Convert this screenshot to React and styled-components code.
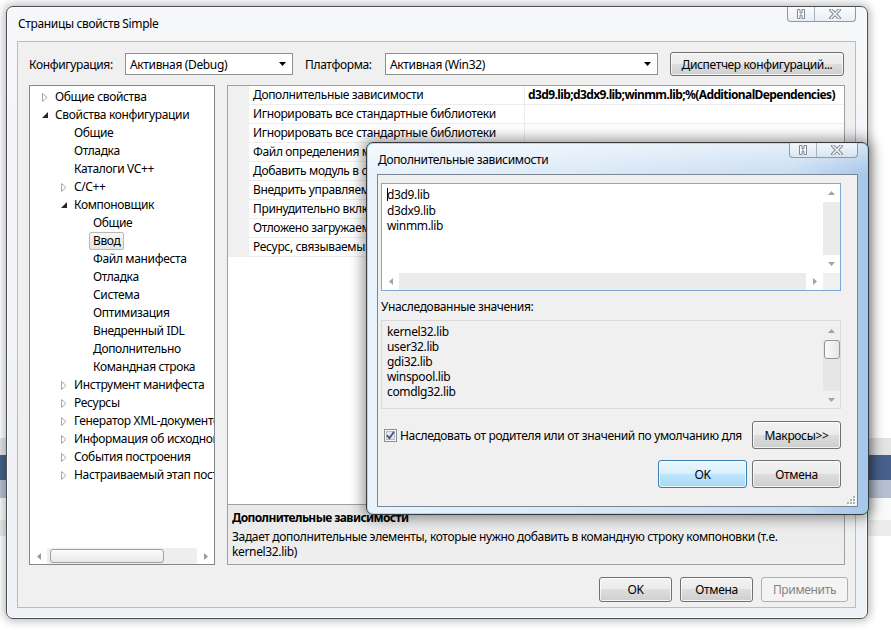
import React from "react";
import styled, { createGlobalStyle } from "styled-components";

const GlobalStyle = createGlobalStyle`
  html, body { margin: 0; padding: 0; }
  body {
    width: 891px; height: 630px; overflow: hidden;
    font-family: "Noto Sans", "Segoe UI", sans-serif;
    font-size: 12px; color: #000;
    letter-spacing: -0.35px;
    background: linear-gradient(180deg, #fff 0, #fff 438px, #e4e4e4 438px, #e4e4e4 455px,
      #46618b 455px, #46618b 480px, #b5c1d2 480px, #b5c1d2 498px, #fafafa 498px,
      #fafafa 520px, #ececec 520px, #ececec 536px, #fff 536px);
  }
  #root { width: 891px; height: 630px; }
`;

const Desktop = styled.div`
  position: relative;
  width: 891px;
  height: 630px;
`;

/* ---------- window chrome ---------- */
const MainWindow = styled.div`
  position: absolute;
  left: 6px; top: 6px;
  width: 862px; height: 613px;
  box-sizing: border-box;
  border: 1px solid #4b4f55;
  border-radius: 7px;
  background: linear-gradient(180deg, #f6f7f9 0, #edf0f4 100%);
  box-shadow: 0 0 9px 2px rgba(0, 0, 0, 0.28), inset 0 0 0 1px rgba(255,255,255,.8);
  display: flex;
  flex-direction: column;
`;

const TitleBar = styled.div`
  height: ${p => p.$h}px;
  flex: none;
  display: flex;
  align-items: flex-start;
  padding-left: 11px;
`;

const TitleText = styled.div`
  padding-top: ${p => p.$top}px;
  line-height: 16px;
  white-space: nowrap;
`;

const CaptionGroup = styled.div`
  margin-left: auto;
  margin-right: ${p => p.$right}px;
  display: flex;
  height: 15px;
  box-sizing: border-box;
  border: 1px solid #8d99a8;
  border-top: none;
  border-radius: 0 0 4px 4px;
  background: linear-gradient(180deg, rgba(255,255,255,.6), rgba(225,232,240,.6));
  overflow: hidden;
`;

const CaptionBtn = styled.div`
  width: ${p => p.$w}px;
  display: flex;
  align-items: center;
  justify-content: center;
  & + & { border-left: 1px solid #a9b3bf; }
`;

const HelpGlyph = () => (
  <svg width="8" height="10" viewBox="0 0 8 10">
    <path d="M0.5 0.5h2.5v3.5h2v-3.5h2.5v9h-2.5v-3.5h-2v3.5h-2.5z" fill="#fff" stroke="#7d8895" strokeWidth="1" />
  </svg>
);

const CloseGlyph = () => (
  <svg width="12" height="10" viewBox="0 0 12 10">
    <path d="M2 1L10 9M10 1L2 9" stroke="#7d8895" strokeWidth="3.4" strokeLinecap="square" />
    <path d="M2 1L10 9M10 1L2 9" stroke="#fff" strokeWidth="1.4" strokeLinecap="square" />
  </svg>
);

const Captions = ({ right }) => (
  <CaptionGroup $right={right}>
    <CaptionBtn $w={26}><HelpGlyph /></CaptionBtn>
    <CaptionBtn $w={40}><CloseGlyph /></CaptionBtn>
  </CaptionGroup>
);

const Client = styled.div`
  flex: 1;
  margin: 0 11px 10px 10px;
  border: 1px solid #b7bdc5;
  background: #f0f0f0;
  padding: 10px 10px 5px 11px;
  display: flex;
  flex-direction: column;
  min-height: 0;
`;

/* ---------- controls ---------- */
const ConfigRow = styled.div`
  display: flex;
  align-items: center;
  height: 24px;
  flex: none;
`;

const FieldLabel = styled.div`
  width: ${p => p.$w}px;
  white-space: nowrap;
`;

const Combo = styled.div`
  box-sizing: border-box;
  width: ${p => p.$w}px;
  margin-right: ${p => p.$mr || 0}px;
  height: 22px;
  border: 1px solid #8e8f8f;
  background: #fff;
  display: flex;
  align-items: center;
  padding: 0 6px 0 4px;
  white-space: nowrap;
`;

const ComboText = styled.span`
  flex: 1;
`;

const DownTri = () => (
  <svg width="7" height="4" viewBox="0 0 7 4"><polygon points="0,0 7,0 3.5,4" fill="#000" /></svg>
);

const Button = styled.button`
  box-sizing: border-box;
  width: ${p => p.$w}px;
  height: ${p => p.$h || 24}px;
  margin-left: ${p => (p.$push ? "auto" : "0")};
  padding: 0;
  font: inherit;
  letter-spacing: inherit;
  color: ${p => (p.disabled ? "#838383" : "#000")};
  border: 1px solid ${p => (p.$default ? "#3c7fb1" : p.disabled ? "#adb2b5" : "#707070")};
  border-radius: 3px;
  background: ${p =>
    p.$default
      ? "linear-gradient(180deg, #eaf6fd 0%, #d9f0fc 50%, #bee6fd 50%, #a7d9f5 100%)"
      : p.disabled
      ? "#f4f4f4"
      : "linear-gradient(180deg, #f2f2f2 0%, #ebebeb 50%, #dddddd 50%, #cfcfcf 100%)"};
  box-shadow: inset 0 0 0 1px ${p => (p.disabled ? "transparent" : "rgba(255,255,255,.75)")};
  flex: none;
`;

/* ---------- panels ---------- */
const Panels = styled.div`
  flex: 1;
  margin-top: 9px;
  display: flex;
  gap: 12px;
  min-height: 0;
`;

const TreePanel = styled.div`
  width: 186px;
  box-sizing: border-box;
  border: 1px solid #828790;
  background: #fff;
  display: flex;
  flex-direction: column;
`;

const TreeBody = styled.div`
  flex: 1;
  overflow: hidden;
  padding-top: 2px;
`;

const TreeRow = styled.div`
  height: 18px;
  display: flex;
  align-items: center;
  padding-left: ${p => 12 + p.$level * 19}px;
  white-space: nowrap;
`;

const ExpSlot = styled.span`
  width: 13px;
  flex: none;
  display: flex;
  align-items: center;
`;

const TreeLabel = styled.span`
  line-height: 16px;
  ${p =>
    p.$sel &&
    `
    margin-left: -4px;
    padding: 0 3px;
    border: 1px solid #b8b8b8;
    border-radius: 2px;
    background: linear-gradient(180deg, #f8f8f8, #e5e5e5);
  `}
`;

const Collapsed = () => (
  <svg width="6" height="9" viewBox="0 0 6 9"><polygon points="0.5,0.5 5,4.5 0.5,8.5" fill="#fff" stroke="#a6a6a6" /></svg>
);
const Expanded = () => (
  <svg width="6" height="6" viewBox="0 0 6 6"><polygon points="6,0 6,6 0,6" fill="#262626" /></svg>
);

const Tri = ({ dir, color = "#a3a3a3" }) => {
  const v = dir === "up" || dir === "down";
  const w = v ? 7 : 4;
  const h = v ? 4 : 7;
  const pts = { up: "0,4 3.5,0 7,4", down: "0,0 7,0 3.5,4", left: "4,0 4,7 0,3.5", right: "0,0 0,7 4,3.5" }[dir];
  return (
    <svg width={w} height={h} viewBox={`0 0 ${w} ${h}`}><polygon points={pts} fill={color} /></svg>
  );
};

const HScroll = styled.div`
  flex: none;
  height: ${p => p.$h || 17}px;
  display: grid;
  grid-template-columns: 17px 1fr 17px;
`;

const VScroll = styled.div`
  display: grid;
  grid-template-rows: ${p => p.$rows};
  width: 17px;
`;

const ScrollBtn = styled.div`
  display: flex;
  align-items: center;
  justify-content: center;
`;

const Track = styled.div`
  background: ${p => p.$bg || "#ebebeb"};
  display: flex;
  flex-direction: ${p => (p.$vertical ? "column" : "row")};
  align-items: center;
`;

const HThumb = styled.div`
  margin-left: 3px;
  width: 114px;
  height: 14px;
  box-sizing: border-box;
  border: 1px solid #a0a0a0;
  border-radius: 3px;
  background: linear-gradient(180deg, #fbfbfb, #e8e8e8);
`;

const VThumb = styled.div`
  width: 16px;
  height: 19px;
  box-sizing: border-box;
  border: 1px solid #959595;
  border-radius: 3px;
  background: linear-gradient(90deg, #fbfbfb, #e6e6e6);
  flex: none;
`;

const GridPanel = styled.div`
  flex: 1;
  box-sizing: border-box;
  border: 1px solid #a0a0a0;
  display: flex;
  flex-direction: column;
  min-width: 0;
`;

const PropArea = styled.div`
  flex: 1;
  background: #fff;
  overflow: hidden;
`;

const PropRow = styled.div`
  display: grid;
  grid-template-columns: 21px 275px 1fr;
  height: 19px;
  box-sizing: border-box;
`;

const Gutter = styled.div`
  background: #f0f0f0;
`;

const PropCell = styled.div`
  border-bottom: 1px solid #ececec;
  border-left: ${p => (p.$value ? "1px solid #ececec" : "none")};
  padding-left: ${p => (p.$value ? 3 : 4)}px;
  font-weight: ${p => (p.$bold ? 700 : 400)};
  letter-spacing: ${p => (p.$bold ? "-0.6px" : "inherit")};
  line-height: 18px;
  white-space: nowrap;
  overflow: hidden;
`;

const Description = styled.div`
  height: 60px;
  flex: none;
  border-top: 1px solid #a0a0a0;
  background: linear-gradient(180deg, #e9e9e9, #efefef);
  padding: 5px 4px 0 4px;
  box-sizing: border-box;
`;

const DescTitle = styled.div`
  font-weight: 700;
  letter-spacing: -0.6px;
  line-height: 16px;
  white-space: nowrap;
  overflow: hidden;
`;

const DescText = styled.div`
  margin-top: 3px;
  line-height: 15px;
`;

const BottomRow = styled.div`
  flex: none;
  margin-top: 12px;
  margin-right: -3px;
  display: flex;
  justify-content: flex-end;
  gap: 8px;
`;

/* ---------- dialog ---------- */
const Dialog = styled.div`
  position: absolute;
  left: 366px; top: 142px;
  width: 503px; height: 373px;
  box-sizing: border-box;
  border: 1px solid #353a40;
  border-radius: 7px;
  background:
    linear-gradient(180deg, rgba(255,255,255,.55) 0, rgba(255,255,255,0) 32px),
    linear-gradient(90deg, #e8f3fc 0%, #d9e8f7 45%, #c8ddf2 85%, #a5c6ea 100%);
  box-shadow: 0 0 14px 3px rgba(0,0,0,.42), inset 0 0 0 1px rgba(120,225,235,.75);
  display: flex;
  flex-direction: column;
`;

const DialogClient = styled.div`
  position: relative;
  flex: 1;
  margin: 0 10px 7px 10px;
  border: 1px solid #7c8793;
  background: #f0f0f0;
  padding: 8px 16px 0 3px;
  display: flex;
  flex-direction: column;
`;

const EditBox = styled.div`
  height: 108px;
  box-sizing: border-box;
  border: 1px solid #7fa9d4;
  background: #fff;
  display: grid;
  grid-template-columns: 1fr 17px;
  grid-template-rows: 1fr 17px;
`;

const EditText = styled.div`
  padding: 3px 0 0 5px;
  line-height: 15.5px;
`;

const Caret = styled.span`
  display: inline-block;
  width: 0;
  height: 13px;
  border-left: 1px solid #000;
  margin-right: -1px;
  vertical-align: -2px;
`;

const Corner = styled.div`
  background: #f0f0f0;
`;

const SectionLabel = styled.div`
  margin-top: 8px;
  line-height: 16px;
`;

const ListBox = styled.div`
  margin-top: 5px;
  height: 89px;
  box-sizing: border-box;
  border: 1px solid #dadada;
  background: #f0f0f0;
  display: grid;
  grid-template-columns: 1fr 17px;
`;

const ListItems = styled.div`
  padding: 3px 0 0 5px;
  line-height: 15px;
`;

const CheckRow = styled.div`
  margin-top: 12px;
  display: flex;
  align-items: center;
`;

const CheckSlot = styled.span`
  flex: none;
  display: flex;
  margin-left: 3px;
`;

const CheckLabel = styled.span`
  margin-left: 3px;
  white-space: nowrap;
`;

const ButtonPair = styled.div`
  margin-top: 11px;
  display: flex;
  justify-content: flex-end;
  gap: 5px;
`;

const Grip = styled.div`
  position: absolute;
  right: 1px;
  bottom: 1px;
  display: flex;
`;

const CheckBox = () => (
  <svg width="13" height="13" viewBox="0 0 13 13">
    <rect x="0.5" y="0.5" width="12" height="12" fill="#f6f6f6" stroke="#8e8f8f" />
    <rect x="2.5" y="2.5" width="8" height="8" fill="#e4e6ea" stroke="#b8bcc4" />
    <path d="M3 6.2 L5.4 9.2 L10 2.8" fill="none" stroke="#3f5588" strokeWidth="1.8" />
  </svg>
);

const GripGlyph = () => (
  <svg width="11" height="11" viewBox="0 0 11 11">
    {[[8, 2], [5, 5], [8, 5], [2, 8], [5, 8], [8, 8]].map(([x, y], i) => (
      <g key={i}>
        <rect x={x + 1} y={y + 1} width="2" height="2" fill="#fff" />
        <rect x={x} y={y} width="2" height="2" fill="#a8b0b8" />
      </g>
    ))}
  </svg>
);

const tree = [
  { t: "Общие свойства", l: 0, a: "c" },
  { t: "Свойства конфигурации", l: 0, a: "e" },
  { t: "Общие", l: 1 },
  { t: "Отладка", l: 1 },
  { t: "Каталоги VC++", l: 1 },
  { t: "C/C++", l: 1, a: "c" },
  { t: "Компоновщик", l: 1, a: "e" },
  { t: "Общие", l: 2 },
  { t: "Ввод", l: 2, sel: true },
  { t: "Файл манифеста", l: 2 },
  { t: "Отладка", l: 2 },
  { t: "Система", l: 2 },
  { t: "Оптимизация", l: 2 },
  { t: "Внедренный IDL", l: 2 },
  { t: "Дополнительно", l: 2 },
  { t: "Командная строка", l: 2 },
  { t: "Инструмент манифеста", l: 1, a: "c" },
  { t: "Ресурсы", l: 1, a: "c" },
  { t: "Генератор XML-документов", l: 1, a: "c" },
  { t: "Информация об исходном коде", l: 1, a: "c" },
  { t: "События построения", l: 1, a: "c" },
  { t: "Настраиваемый этап построения", l: 1, a: "c" },
];

const props = [
  ["Дополнительные зависимости", "d3d9.lib;d3dx9.lib;winmm.lib;%(AdditionalDependencies)"],
  ["Игнорировать все стандартные библиотеки", ""],
  ["Игнорировать все стандартные библиотеки", ""],
  ["Файл определения модуля", ""],
  ["Добавить модуль в сборку", ""],
  ["Внедрить управляемый файл ресурсов", ""],
  ["Принудительно включать ссылки на символы", ""],
  ["Отложено загружаемые библиотеки DLL", ""],
  ["Ресурс, связываемый со сборкой", ""],
];

const inherited = ["kernel32.lib", "user32.lib", "gdi32.lib", "winspool.lib", "comdlg32.lib"];

export default function App() {
  return (
    <Desktop>
      <GlobalStyle />
      <MainWindow>
        <TitleBar $h={34}>
          <TitleText $top={9}>Страницы свойств Simple</TitleText>
          <Captions right={11} />
        </TitleBar>
        <Client>
          <ConfigRow>
            <FieldLabel $w={96}>Конфигурация:</FieldLabel>
            <Combo $w={168} $mr={12}>
              <ComboText>Активная (Debug)</ComboText>
              <DownTri />
            </Combo>
            <FieldLabel $w={80}>Платформа:</FieldLabel>
            <Combo $w={273} $mr={12}>
              <ComboText>Активная (Win32)</ComboText>
              <DownTri />
            </Combo>
            <Button $w={174}>Диспетчер конфигураций...</Button>
          </ConfigRow>
          <Panels>
            <TreePanel>
              <TreeBody>
                {tree.map((n, i) => (
                  <TreeRow key={i} $level={n.l}>
                    <ExpSlot>{n.a === "c" ? <Collapsed /> : n.a === "e" ? <Expanded /> : null}</ExpSlot>
                    <TreeLabel $sel={n.sel}>{n.t}</TreeLabel>
                  </TreeRow>
                ))}
              </TreeBody>
              <HScroll $h={16}>
                <ScrollBtn><Tri dir="left" color="#9a9a9a" /></ScrollBtn>
                <Track $bg="#eeeeee"><HThumb /></Track>
                <ScrollBtn><Tri dir="right" color="#9a9a9a" /></ScrollBtn>
              </HScroll>
            </TreePanel>
            <GridPanel>
              <PropArea>
                {props.map(([name, value], i) => (
                  <PropRow key={i}>
                    <Gutter />
                    <PropCell>{name}</PropCell>
                    <PropCell $value $bold={!!value}>{value}</PropCell>
                  </PropRow>
                ))}
              </PropArea>
              <Description>
                <DescTitle>Дополнительные зависимости</DescTitle>
                <DescText>
                  Задает дополнительные элементы, которые нужно добавить в командную строку компоновки (т.е.
                  <br />
                  kernel32.lib)
                </DescText>
              </Description>
            </GridPanel>
          </Panels>
          <BottomRow>
            <Button $w={73} $h={25}>OK</Button>
            <Button $w={73} $h={25}>Отмена</Button>
            <Button $w={87} $h={25} disabled>Применить</Button>
          </BottomRow>
        </Client>
      </MainWindow>

      <Dialog>
        <TitleBar $h={31}>
          <TitleText $top={9}>Дополнительные зависимости</TitleText>
          <Captions right={10} />
        </TitleBar>
        <DialogClient>
          <EditBox>
            <EditText>
              <Caret />d3d9.lib
              <br />
              d3dx9.lib
              <br />
              winmm.lib
            </EditText>
            <VScroll $rows="18px 1fr 18px">
              <ScrollBtn><Tri dir="up" /></ScrollBtn>
              <Track />
              <ScrollBtn><Tri dir="down" /></ScrollBtn>
            </VScroll>
            <HScroll>
              <ScrollBtn><Tri dir="left" /></ScrollBtn>
              <Track />
              <ScrollBtn><Tri dir="right" /></ScrollBtn>
            </HScroll>
            <Corner />
          </EditBox>
          <SectionLabel>Унаследованные значения:</SectionLabel>
          <ListBox>
            <ListItems>
              {inherited.map(s => (
                <div key={s}>{s}</div>
              ))}
            </ListItems>
            <VScroll $rows="19px 1fr 17px">
              <ScrollBtn><Tri dir="up" /></ScrollBtn>
              <Track $vertical $bg="#e6e6e6"><VThumb /></Track>
              <ScrollBtn><Tri dir="down" /></ScrollBtn>
            </VScroll>
          </ListBox>
          <CheckRow>
            <CheckSlot><CheckBox /></CheckSlot>
            <CheckLabel>Наследовать от родителя или от значений по умолчанию для</CheckLabel>
            <Button $w={89} $h={28} $push>Макросы&gt;&gt;</Button>
          </CheckRow>
          <ButtonPair>
            <Button $w={89} $h={28} $default>OK</Button>
            <Button $w={89} $h={28}>Отмена</Button>
          </ButtonPair>
          <Grip><GripGlyph /></Grip>
        </DialogClient>
      </Dialog>
    </Desktop>
  );
}
